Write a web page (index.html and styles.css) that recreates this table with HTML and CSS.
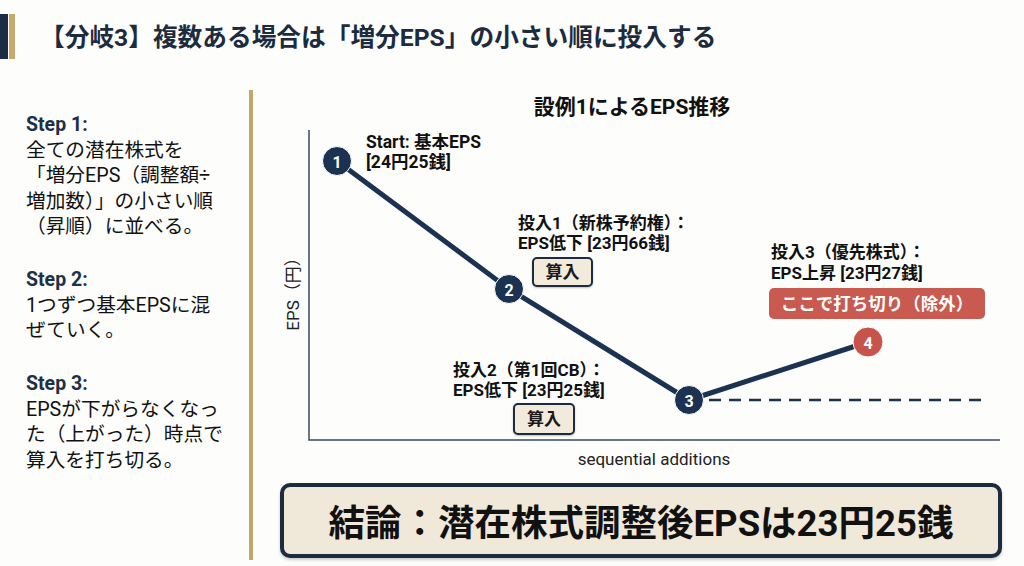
FILE: index.html
```html
<!DOCTYPE html>
<html lang="ja">
<head>
<meta charset="utf-8">
<title>分岐3</title>
<link rel="stylesheet" href="styles.css">
</head>
<body>
<header class="header">
  <div class="bar-navy"></div>
  <div class="bar-gold"></div>
  <h1 class="title">【分岐3】複数ある場合は「増分EPS」の小さい順に投入する</h1>
</header>
<main class="main">
  <section class="steps">
    <div class="step">
      <div class="step-label">Step 1:</div>
      <div class="step-text">全ての潜在株式を<br>「増分EPS（調整額÷<br>増加数）」の小さい順<br>（昇順）に並べる。</div>
    </div>
    <div class="step">
      <div class="step-label">Step 2:</div>
      <div class="step-text">1つずつ基本EPSに混<br>ぜていく。</div>
    </div>
    <div class="step">
      <div class="step-label">Step 3:</div>
      <div class="step-text">EPSが下がらなくなっ<br>た（上がった）時点で<br>算入を打ち切る。</div>
    </div>
  </section>
  <div class="divider"></div>
  <section class="right">
    <div class="chart-title">設例1によるEPS推移</div>
    <div class="chart">
      <svg class="chart-svg" width="722" height="330" viewBox="0 0 722 330">
        <path d="M29 11 V321 H720" fill="none" stroke="#3a485a" stroke-width="1.5"/>
        <text class="axis-y" transform="translate(13,171) rotate(-90)" text-anchor="middle" dominant-baseline="central">EPS（円）</text>
        <line x1="409" y1="281" x2="703" y2="281" stroke="#1b3250" stroke-width="2.5" stroke-dasharray="12 8"/>
        <polyline points="57,42 229,170 409,281 588,223" fill="none" stroke="#1b3250" stroke-width="5" stroke-linejoin="round" stroke-linecap="round"/>
        <circle cx="57" cy="42" r="14.5" fill="#1b3250" stroke="#fff" stroke-width="1"/>
        <circle cx="229" cy="170" r="14.5" fill="#1b3250" stroke="#fff" stroke-width="1"/>
        <circle cx="409" cy="281" r="14.5" fill="#1b3250" stroke="#fff" stroke-width="1"/>
        <circle cx="588" cy="223" r="15" fill="#c8534a" stroke="#fff" stroke-width="1"/>
        <text class="node-num" x="57" y="43" text-anchor="middle" dominant-baseline="central">1</text>
        <text class="node-num" x="229" y="171" text-anchor="middle" dominant-baseline="central">2</text>
        <text class="node-num" x="409" y="282" text-anchor="middle" dominant-baseline="central">3</text>
        <text class="node-num" x="588" y="224" text-anchor="middle" dominant-baseline="central">4</text>
      </svg>
      <div class="note note-start">Start: 基本EPS<br>[24円25銭]</div>
      <div class="note note-1">
        <div class="note-text">投入1（新株予約権）：<br>EPS低下 [23円66銭]</div>
        <div class="tag tag-1">算入</div>
      </div>
      <div class="note note-2">
        <div class="note-text">投入2（第1回CB）：<br>EPS低下 [23円25銭]</div>
        <div class="tag tag-2">算入</div>
      </div>
      <div class="note note-3">
        <div class="note-text note-text-3">投入3（優先株式）：<br>EPS上昇 [23円27銭]</div>
        <div class="cut">ここで打ち切り（除外）</div>
      </div>
    </div>
    <div class="x-label">sequential additions</div>
    <div class="conclusion">結論：潜在株式調整後EPSは23円25銭</div>
  </section>
</main>
</body>
</html>
```

FILE: styles.css
```css
html, body {
  margin: 0;
  padding: 0;
}
body {
  width: 1024px;
  height: 566px;
  overflow: hidden;
  background: #fdfdfc;
  font-family: Roboto, "Noto Sans CJK JP", sans-serif;
  color: #111;
}
.header {
  display: flex;
  align-items: center;
  height: 45px;
  margin-top: 14px;
}
.bar-navy {
  width: 8px;
  height: 45px;
  background: #1b2c44;
}
.bar-gold {
  width: 6px;
  height: 45px;
  margin-left: 1px;
  background: #c6a96b;
}
.title {
  margin: 2px 0 0 25px;
  font-size: 24.7px;
  font-weight: 700;
  line-height: 45px;
  color: #1c2b3e;
}
.main {
  display: grid;
  grid-template-columns: 249px 4px 1fr;
  height: 470px;
  margin-top: 31px;
}
.steps {
  padding: 22px 0 0 26px;
}
.step {
  margin-bottom: 27.5px;
}
.step-label {
  font-size: 19.5px;
  line-height: 25.5px;
  font-weight: 700;
  color: #1c3048;
}
.step-text {
  font-size: 19.7px;
  line-height: 25.5px;
  color: #111;
  white-space: nowrap;
}
.divider {
  background: #c2a568;
}
.right {
  display: flex;
  flex-direction: column;
  padding: 5px 22px 0 27px;
}
.chart-title {
  font-size: 21px;
  line-height: 24px;
  font-weight: 700;
  text-align: center;
  padding-right: 18px;
  color: #111;
}
.chart {
  position: relative;
  height: 330px;
}
.chart-svg {
  position: absolute;
  left: 0;
  top: 0;
}
.axis-y {
  font-family: Roboto, "Noto Sans CJK JP", sans-serif;
  font-size: 17px;
  fill: #222;
}
.node-num {
  font-family: Roboto, "Noto Sans CJK JP", sans-serif;
  font-size: 16px;
  font-weight: 700;
  fill: #fff;
}
.note {
  position: absolute;
  font-size: 17px;
  line-height: 20px;
  font-weight: 700;
  color: #111;
  white-space: nowrap;
}
.note-start {
  left: 86px;
  top: 13px;
  font-size: 17.5px;
}
.note-1 {
  left: 238px;
  top: 94px;
}
.note-2 {
  left: 173px;
  top: 241px;
}
.note-3 {
  left: 491px;
  top: 123px;
}
.note-text-3 {
  line-height: 21px;
}
.tag {
  width: 61px;
  height: 30px;
  box-sizing: border-box;
  border: 2px solid #1c2b3e;
  border-radius: 5px;
  background: #f2ebdc;
  display: flex;
  align-items: center;
  justify-content: center;
  font-size: 17px;
  font-weight: 700;
  color: #1a1a1a;
  box-shadow: 0 1px 2px rgba(0, 0, 0, 0.25);
}
.tag-1 {
  margin: 4px 0 0 14px;
}
.tag-2 {
  margin: 3px 0 0 60px;
  width: 62px;
  height: 32px;
}
.cut {
  margin: 4px 0 0 -2px;
  width: 216px;
  height: 31px;
  border-radius: 5px;
  background: #c85a4f;
  color: #fff;
  display: flex;
  align-items: center;
  justify-content: center;
  font-size: 17.5px;
  font-weight: 700;
}
.x-label {
  font-size: 17px;
  line-height: 20px;
  text-align: center;
  padding-left: 26px;
  color: #222;
}
.conclusion {
  margin-top: 14px;
  height: 75px;
  box-sizing: border-box;
  border: 4px solid #1c2b3e;
  border-radius: 10px;
  background: #f0e9d9;
  display: flex;
  align-items: center;
  justify-content: center;
  font-size: 36.5px;
  font-weight: 700;
  color: #111;
  box-shadow: 0 2px 3px rgba(0, 0, 0, 0.2);
}
```
